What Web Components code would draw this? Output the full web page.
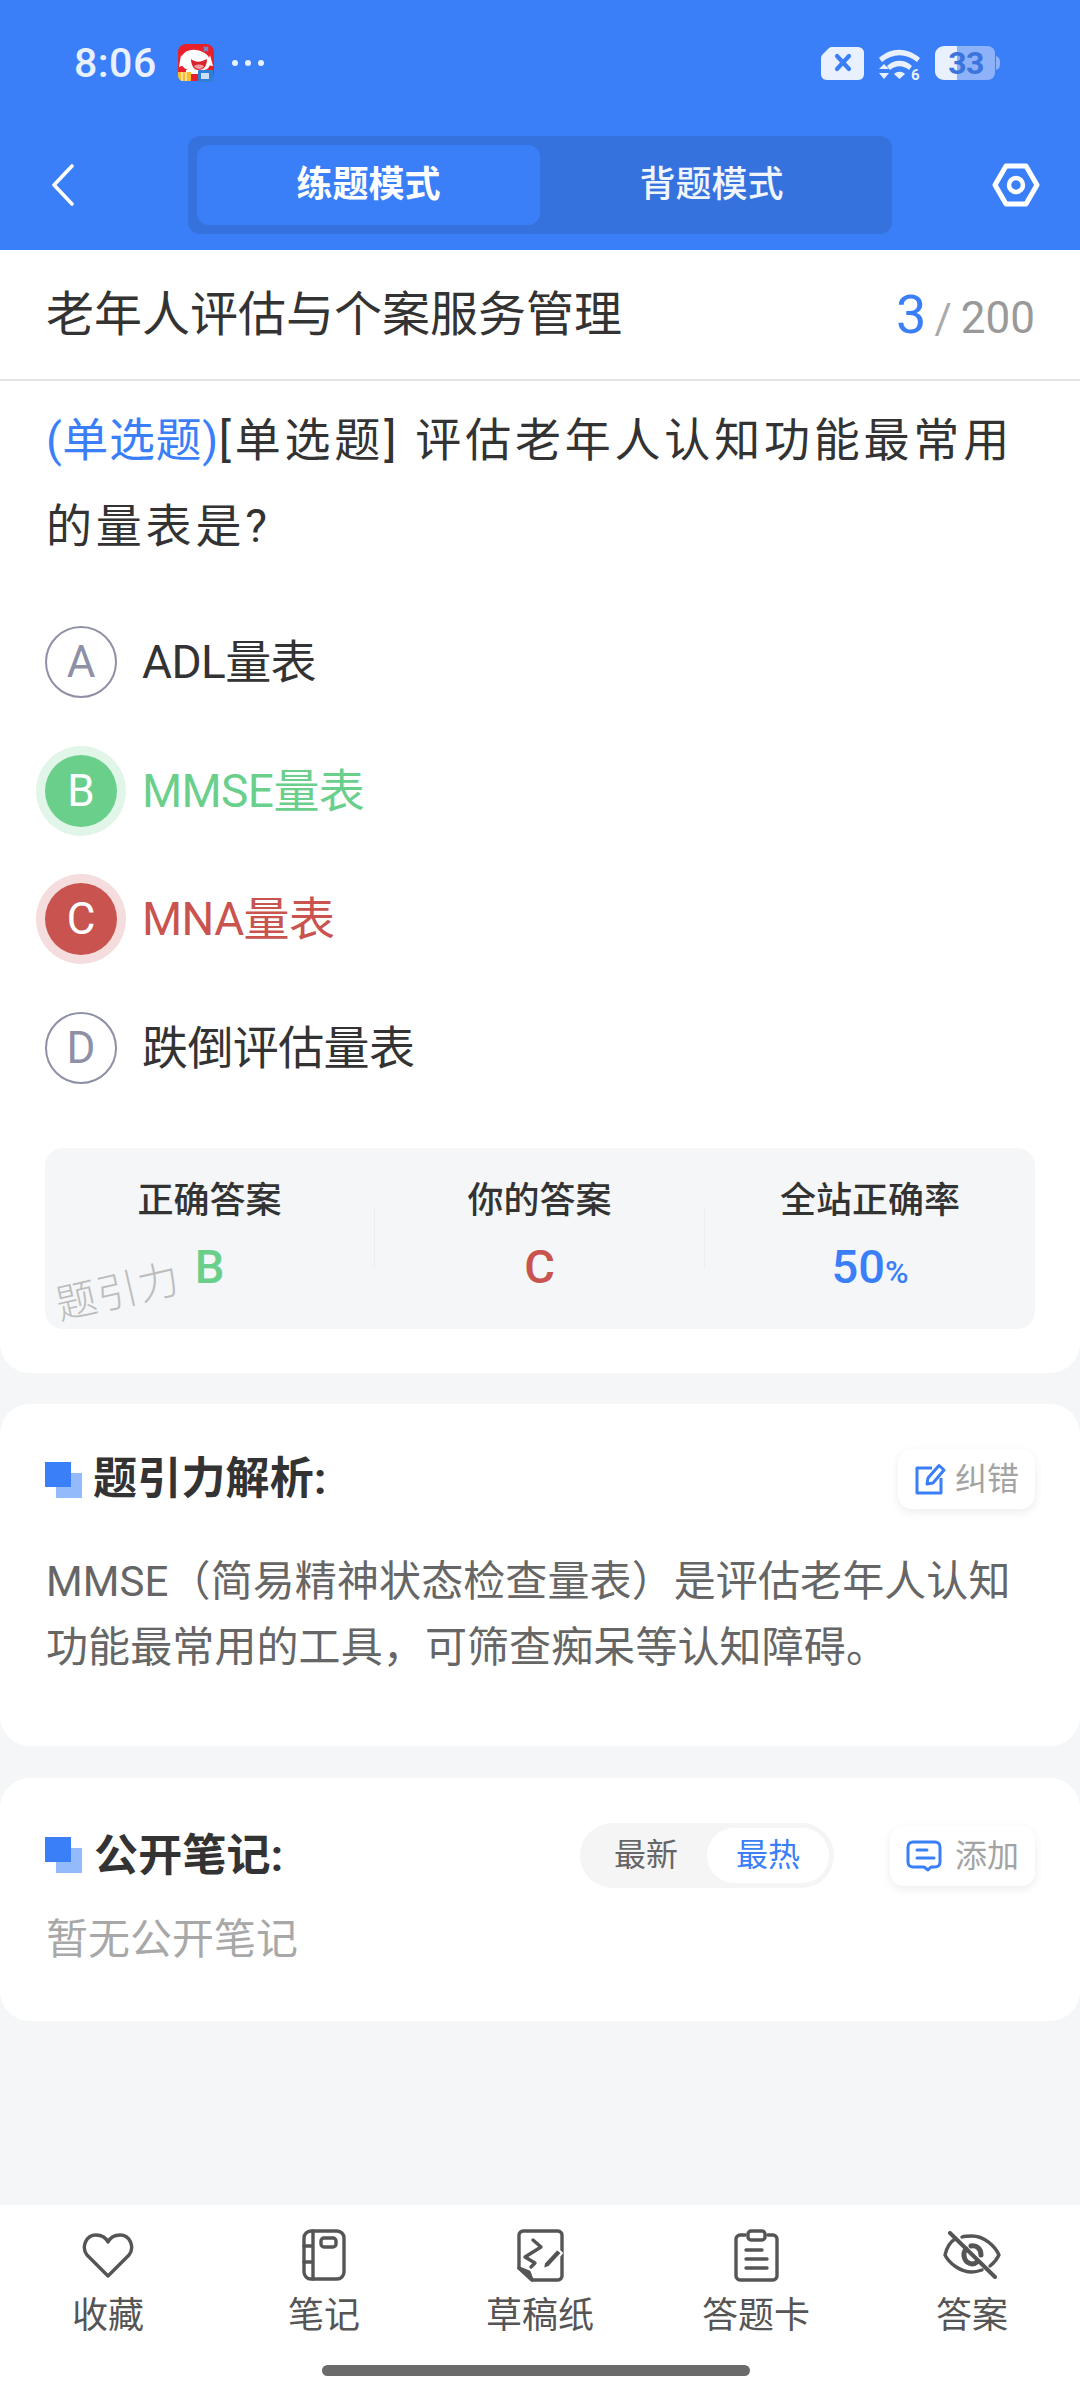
<!DOCTYPE html>
<html lang="zh-CN"><head><meta charset="utf-8"><title>练题模式</title>
<style>
html,body{margin:0;padding:0;background:#f4f6f8}
body{font-family:Roboto,"Noto Sans CJK SC",sans-serif;color:#333}
</style></head><body>
<quiz-app>
  <app-header></app-header>
  <title-row name="老年人评估与个案服务管理" current="3" total="200"></title-row>
  <question-card>
    <span slot="tag">(单选题)</span>
    <span slot="text">[单选题] 评估老年人认知功能最常用的量表是?</span>
    <option-row letter="A" text="ADL量表"></option-row>
    <option-row letter="B" text="MMSE量表" state="right"></option-row>
    <option-row letter="C" text="MNA量表" state="wrong"></option-row>
    <option-row letter="D" text="跌倒评估量表"></option-row>
    <stats-box slot="stats"></stats-box>
  </question-card>
  <analysis-card></analysis-card>
  <notes-card></notes-card>
  <bottom-bar></bottom-bar>
</quiz-app>
<script>
function def(name, css, html, init){
  customElements.define(name, class extends HTMLElement{
    constructor(){super();this.attachShadow({mode:'open'})}
    connectedCallback(){
      const a=n=>this.getAttribute(n)||'';
      this.shadowRoot.innerHTML='<style>'+css+'</style>'+(typeof html==='function'?html(a):html);
    }
  });
}
const CJK='Roboto,"Noto Sans CJK SC",sans-serif';

def('quiz-app',`:host{display:flex;flex-direction:column;height:2400px;width:1080px;overflow:hidden;background:#f4f6f8;font-family:${CJK}}`,`<slot></slot>`);

def('status-bar',`
:host{display:flex;align-items:center;height:126px;padding:0 80px 0 74px;box-sizing:border-box;color:#e9f1ff}
.t{font:500 41px/1 Roboto,sans-serif;letter-spacing:.5px;width:103px}
.left{display:flex;align-items:center}
.dots{display:flex;gap:7px;margin-left:17px}
.dots i{width:6px;height:6px;border-radius:50%;background:#e9f1ff}
.right{margin-left:auto;display:flex;align-items:center}
svg{display:block}
.bat{position:relative;width:65px;height:34px;margin-left:13px}
.bat b{position:absolute;left:0;right:0;top:0;bottom:0;text-align:center;font:700 32px/34px Roboto,sans-serif;color:#3a74dc;padding-right:3px;letter-spacing:-.5px}
`,`
<div class="left"><span class="t">8:06</span>
<svg width="38" height="40" viewBox="0 0 38 40">
  <rect x="1" y="1" width="36" height="37" rx="8" fill="#e8202a"/>
  <path d="M4 18C4 9 12 6 19 7C27 8 34 13 33 20C33 26 28 28 21 28C13 29 4 26 4 18Z" fill="#fff"/>
  <path d="M4 12L2 24L8 22Z" fill="#fff"/><path d="M33 12L36 23L30 22Z" fill="#fff"/>
  <path d="M14 16C19 20 24 19 30 16C30 24 26 27 21 27C17 27 14 22 14 16Z" fill="#d8222c"/>
  <path d="M17 23C20 21 24 21 27 23C25 27 19 27 17 23Z" fill="#f79aa0"/>
  <path d="M9 27H30V31H9Z" fill="#fff"/>
  <path d="M1 29H14V38H7C3 38 1 36 1 32Z" fill="#f7bd2c"/><path d="M5 29V38M9 29V38" stroke="#fff" stroke-width="1"/>
  <rect x="21" y="27" width="15" height="12" rx="1" fill="#2f7fd6"/><rect x="24" y="30" width="8" height="6" fill="#fff" opacity=".75"/>
  <path d="M27 4L31 8M31 4L27 8" stroke="#6f8fd0" stroke-width="2"/>
</svg>
<span class="dots"><i></i><i></i><i></i></span></div>
<div class="right">
<svg width="43" height="34" viewBox="0 0 43 34"><path d="M11 1H36C40 1 43 3 43 7V28C43 31 41 34 37 34H6C2 34 0 31 0 28V12C0 10 1 9 2 8L8 2C9 1 10 1 11 1Z" fill="#e9f1ff"/><path d="M16 10L28 23M28 10L16 23" stroke="#3b7ff8" stroke-width="4.2" stroke-linecap="round"/></svg>
<svg style="margin-left:12px" width="46" height="35" viewBox="0 0 46 35"><path d="M3 12C15 1 31 1 44 12L41 16C30 7 17 7 6 16Z" fill="#e9f1ff"/><path d="M11 20C18 13 29 13 36 20L33 24C27 19 20 19 14 24Z" fill="#e9f1ff"/><path d="M18 28C21 25 26 25 29 28L23.500 33Z" fill="#e9f1ff"/><path d="M3 22L8 17L13 22ZM3 26H13L8 32Z" fill="#e9f1ff" transform="translate(0 1)"/><text x="35" y="34" font-family="Roboto" font-weight="700" font-size="15" fill="#e9f1ff">6</text></svg>
<div class="bat"><svg width="65" height="34" viewBox="0 0 65 34"><path d="M10 0H52C58 0 60 4 60 8V26C60 30 58 34 52 34H10C4 34 0 30 0 25V9C0 4 4 0 10 0Z" fill="#8db2f9"/><path d="M61 10C64 11 65 13 65 17C65 21 64 23 61 24Z" fill="#8db2f9"/><path d="M10 0H22V34H10C4 34 0 30 0 25V9C0 4 4 0 10 0Z" fill="#e9f1ff"/></svg><b>33</b></div>
</div>`);

def('app-header',`
:host{display:block;background:#3b7ff8;height:250px;flex:none}
.nav{display:flex;align-items:center;height:98px;margin-top:10px;padding:0 40px 0 51px}
.tabs{display:flex;width:704px;height:98px;box-sizing:border-box;padding:9px;margin-left:114px;background:#3672dd;border-radius:12px}
.tabs div{flex:1;display:flex;align-items:center;justify-content:center;color:#fff;font:500 36px/1 ${CJK};border-radius:12px}
.tabs .on{background:#3b7ff8;font-weight:700}
.tabs .off{font-weight:500;color:#f0f5ff}
.gear{margin-left:auto}
svg{display:block;flex:none}
`,`<status-bar></status-bar>
<div class="nav">
<svg width="23" height="42" viewBox="0 0 23 42"><path d="M21 2L3 21L21 40" fill="none" stroke="#fff" stroke-width="3.6" stroke-linecap="round" stroke-linejoin="round"/></svg>
<div class="tabs"><div class="on">练题模式</div><div class="off">背题模式</div></div>
<svg class="gear" width="48" height="44" viewBox="0 0 48 44"><path d="M14 3H34L45 22L34 41H14L3 22Z" fill="none" stroke="#fff" stroke-width="5" stroke-linejoin="round"/><circle cx="24" cy="22" r="7" fill="none" stroke="#fff" stroke-width="4.500"/></svg>
</div>`);

def('title-row',`
:host{display:flex;align-items:center;justify-content:space-between;height:131px;box-sizing:border-box;padding:0 45px 0 46px;background:#fff;border-bottom:2px solid #e3e3e3;flex:none}
.n{font:400 48px/1 ${CJK};color:#333}
.c{display:flex;align-items:baseline;font-family:Roboto,sans-serif;color:#999}
.c b{font-weight:400;font-size:54px;color:#3b7ff8}
.c i{font-style:normal;font-size:42px;margin:0 9px 0 8px;color:#aaa}
.c span{font-size:44px}
`,a=>`<span class="n">${a('name')}</span><span class="c"><b>${a('current')}</b><i>/</i><span>${a('total')}</span></span>`);

def('question-card',`
:host{display:block;background:#fff;border-radius:0 0 30px 30px;padding:16px 45px 44px 46px;flex:none}
.q{font:400 46px/86px ${CJK};color:#333;letter-spacing:3.800px;margin-right:-6px}
.q ::slotted([slot=tag]){color:#3b7ff8;letter-spacing:.6px}
.opts{display:flex;flex-direction:column;gap:56.700px;margin-top:57px}
.st{margin-top:64px;margin-left:-1px}
`,`<div class="q"><slot name="tag"></slot><slot name="text"></slot></div><div class="opts"><slot></slot></div><div class="st"><slot name="stats"></slot></div>`);

def('option-row',`
:host{display:flex;align-items:center;height:72px;margin-left:-1px}
.c{width:72px;height:72px;box-sizing:border-box;border-radius:50%;border:2px solid #8e90a6;color:#8e90a6;display:flex;align-items:center;justify-content:center;font:400 44px/1 Roboto,sans-serif;flex:none}
.t{margin-left:25px;font:400 46px/1 ${CJK};color:#333;letter-spacing:-.6px}
:host([state=right]) .c{background:#6bcf8c;border:0;color:#fff;box-shadow:0 0 0 9px rgba(107,207,140,.2)}
:host([state=right]) .t{color:#6bcf8c}
:host([state=wrong]) .c{background:#c9534f;border:0;color:#fff;box-shadow:0 0 0 9px rgba(201,83,79,.2)}
:host([state=wrong]) .t{color:#c9534f}
`,a=>`<div class="c">${a('letter')}</div><div class="t">${a('text')}</div>`);

def('stats-box',`
:host{display:grid;grid-template-columns:329px 1px 329px 1px 1fr;height:181px;background:#f4f6f8;border-radius:18px;position:relative;overflow:hidden}
.col{display:flex;flex-direction:column;align-items:center;padding-top:32px}
.l{font:500 36px/42px ${CJK};color:#333}
.v{font:500 47px/54px Roboto,sans-serif;margin-top:18px}
.v small{font-size:32px}
.sep{background:#ebedf0;height:60px;margin-top:60px}
.wm{position:absolute;left:10px;top:124px;font:300 41px/1 ${CJK};color:#bdbdbd;transform:rotate(-13deg);letter-spacing:1px;white-space:nowrap}
`,`<div class="col"><div class="l">正确答案</div><div class="v" style="color:#6bcf8c">B</div></div><div class="sep"></div>
<div class="col"><div class="l">你的答案</div><div class="v" style="color:#c9534f">C</div></div><div class="sep"></div>
<div class="col"><div class="l">全站正确率</div><div class="v" style="color:#3b7ff8">50<small>%</small></div></div>
<div class="wm">题引力</div>`);

def('section-mark',`:host{display:block;width:37px;height:37px;position:relative;flex:none}
i{position:absolute;display:block;width:26px;height:25px}
.a{left:11px;top:11px;background:#93bbfb}.b{left:0;top:0;background:#3b7ff8}`,`<i class="a"></i><i class="b"></i>`);

def('chip-button',`
:host{display:flex;align-items:center;justify-content:center;background:#fff;border-radius:14px;box-shadow:0 3px 10px rgba(0,0,0,.08);height:60px;font:400 32px/1 ${CJK};color:#a3a3a3;gap:9px;box-sizing:border-box;flex:none}
`,`<slot></slot>`);

def('analysis-card',`
:host{display:block;background:#fff;border-radius:30px;margin-top:31px;height:342px;box-sizing:border-box;padding:45px 45px 0 46px;flex:none}
.h{display:flex;align-items:center;height:60px}
section-mark{margin-left:-1px;margin-top:2px}
.tt{font:700 44px/1 ${CJK};color:#333;margin-left:11px;letter-spacing:.2px}
chip-button{margin-left:auto;width:137px}
p{margin:40px 0 0;font:400 42px/66px ${CJK};color:#666;width:995px;letter-spacing:.1px}
svg{display:block}
`,`<div class="h"><section-mark></section-mark><span class="tt">题引力解析:</span>
<chip-button><svg width="32" height="32" viewBox="0 0 32 32" fill="none" stroke="#3b7ff8" stroke-width="3"><path d="M18 5H3V30H27V15" stroke-linejoin="round"/><path d="M13 21L14 15L25 2.500L30 7L19 20Z" stroke-linejoin="round"/></svg><span>纠错</span></chip-button></div>
<p>MMSE（简易精神状态检查量表）是评估老年人认知功能最常用的工具，可筛查痴呆等认知障碍。</p>`);

def('notes-card',`
:host{display:block;background:#fff;border-radius:30px;margin-top:32px;height:243px;box-sizing:border-box;padding:45px 45px 0 46px;flex:none}
.h{display:flex;align-items:center;height:65px}
section-mark{margin-left:-1px;margin-top:-1px}
.tt{font:700 44px/1 ${CJK};color:#333;margin-left:12px;letter-spacing:.2px}
.seg{margin-left:auto;display:flex;width:254px;height:65px;box-sizing:border-box;padding:5px;background:#f5f5f5;border-radius:33px;font:400 32px/55px ${CJK};color:#666}
.seg span{text-align:center;flex:1}
.seg .on{flex:none;width:122px;background:#fff;border-radius:28px;color:#3b7ff8}
chip-button{margin-left:56px;width:145px;gap:13px}
svg{display:block}
.e{margin:19px 0 0;font:400 42px/66px ${CJK};color:#a8a8a8}
`,`<div class="h"><section-mark></section-mark><span class="tt">公开笔记:</span>
<div class="seg"><span>最新</span><span class="on">最热</span></div>
<chip-button><svg width="36" height="32" viewBox="0 0 36 32" fill="none" stroke="#3b7ff8" stroke-width="3"><path d="M7 2H29C32 2 34 4 34 7V22C34 25 32 27 29 27H25L22 30L18 27H7C4 27 2 25 2 22V7C2 4 4 2 7 2Z" stroke-linejoin="round"/><path d="M11 10H21M11 18H28" stroke-linecap="round"/></svg><span>添加</span></chip-button></div>
<div class="e">暂无公开笔记</div>`);

def('bar-item',`
:host{display:flex;flex-direction:column;align-items:center;font:400 36px/1 ${CJK};color:#555;flex:1}
.i{height:54px;display:flex;align-items:center;justify-content:center}
.l{margin-top:13px;line-height:42px}
`,a=>`<div class="i"><slot></slot></div><div class="l">${a('label')}</div>`);

def('bottom-bar',`
:host{display:block;margin-top:auto;background:#fff;height:195px;position:relative;flex:none;box-sizing:border-box;padding-top:23px}
.row{display:flex;padding:0 0}
.home{width:428px;height:11px;border-radius:6px;background:#6b6b6b;margin:0 auto;margin-top:28px;transform:translateX(-4px)}
svg{display:block;fill:none;stroke:#555;stroke-width:3.400;stroke-linecap:round;stroke-linejoin:round}
`,`<div class="row">
<bar-item label="收藏"><svg width="52" height="46" viewBox="0 0 52 46"><path d="M26 44L5 23C-1 15 4 3 14 3C20 3 24 6 26 10C28 6 32 3 38 3C48 3 53 15 47 23Z"/></svg></bar-item>
<bar-item label="笔记"><svg width="44" height="52" viewBox="0 0 44 52"><rect x="2" y="2" width="40" height="48" rx="7"/><path d="M11 2V50M2 17H11M2 33H11"/><rect x="19" y="9" width="15" height="9" rx="3"/></svg></bar-item>
<bar-item label="草稿纸"><svg width="47" height="53" viewBox="0 0 47 53"><path d="M6 2H41C43 2 45 4 45 6V47C45 49 43 51 41 51H15L2 39V6C2 4 4 2 6 2Z"/><path d="M2 39L12 43L15 51Z" fill="#555"/><path d="M16 11L24 18L8 28L18 34L14 38"/><path d="M27 34L40 20L45 24L32 38L26 40Z" fill="#555" stroke="#fff" stroke-width="2"/></svg></bar-item>
<bar-item label="答题卡"><svg width="45" height="53" viewBox="0 0 45 53"><path d="M11 6H6C4 6 2 8 2 10V47C2 49 4 51 6 51H39C41 51 43 49 43 47V10C43 8 41 6 39 6H34"/><rect x="14" y="2" width="17" height="9" rx="3"/><path d="M12 21H28M12 30H33M12 39H33"/></svg></bar-item>
<bar-item label="答案"><svg width="58" height="48" viewBox="0 0 58 48"><path d="M12 8C7 11 4 15 2 24C6 32 17 41 29 41C33 41 36 40 39 39M19 6C22 5 25 5 29 5C41 5 52 15 56 24C54 28 51 32 47 35"/><path d="M23 18C19 23 21 32 29 33C31 33 33 32 34 31M28 15C34 14 38 18 38 24" stroke-width="5"/><path d="M7 2L52 46" stroke-width="4"/></svg></bar-item>
</div><div class="home"></div>`);
</script>
</body></html>
